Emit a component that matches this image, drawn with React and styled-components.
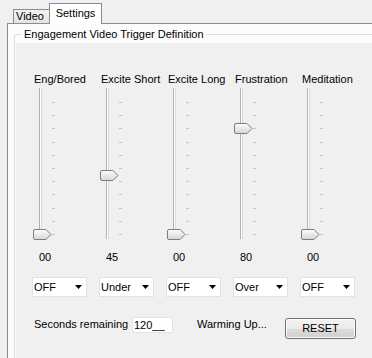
import React from "react";
import styled, { createGlobalStyle } from "styled-components";

const GlobalStyle = createGlobalStyle`
  body {
    margin: 0;
    background: #f0f0f0;
    font-family: "Liberation Sans", Arial, sans-serif;
    font-size: 11px;
    color: #000;
  }
`;

const Window = styled.div`
  width: 372px;
  height: 358px;
  overflow: hidden;
  background: #f0f0f0;
`;

const TabStrip = styled.div`
  display: flex;
  align-items: flex-end;
  height: 23px;
  padding-left: 13px;
`;

const Tab = styled.div`
  box-sizing: border-box;
  position: relative;
  border: 1px solid #898c95;
  border-bottom: none;
  text-align: center;
  ${(p) =>
    p.$active
      ? `
    z-index: 1;
    width: 53px;
    height: 21px;
    margin-bottom: -1px;
    line-height: 19px;
    background: #fff;
  `
      : `
    width: 36px;
    height: 14px;
    border-right: none;
    line-height: 13px;
    text-align: left;
    padding-left: 2px;
    background: linear-gradient(#f3f3f3, #e3e3e3);
  `}
`;

const TabPage = styled.div`
  margin-left: 7px;
  width: 400px;
  height: 360px;
  border-top: 1px solid #898c95;
  border-left: 1px solid #898c95;
  background: #fcfcfc;
`;

const Group = styled.fieldset`
  margin: 4px 0 0 6px;
  padding: 0;
  width: 400px;
  border: 1px solid #d5dfe5;
  border-radius: 3px;
  min-inline-size: 0;
`;

const Legend = styled.legend`
  margin-left: 7px;
  padding: 0 2px;
  line-height: 13px;
`;

const Content = styled.div`
  margin: 2px 0 0 1px;
  padding: 30px 0 40px 10px;
  background: #f0f0f0;
`;

const Columns = styled.div`
  display: flex;
`;

const Column = styled.div`
  width: 67px;
  display: flex;
  flex-direction: column;
`;

const ColLabel = styled.div`
  margin-left: 8px;
  height: 13px;
  line-height: 13px;
  white-space: nowrap;
`;

const SliderArea = styled.div`
  position: relative;
  display: flex;
  height: 152px;
  margin-top: 2px;
`;

const Track = styled.div`
  box-sizing: border-box;
  margin-left: 13px;
  width: 3px;
  height: 151px;
  border-left: 1px solid #b0b0b0;
  border-right: 1px solid #dadada;
  background: #fff;
`;

const Ticks = styled.div`
  display: flex;
  flex-direction: column;
  justify-content: space-between;
  margin: 14px 0 0 10px;
  height: 133px;
`;

const Tick = styled.div`
  width: 3px;
  height: 1px;
  background: #c4c4c4;
`;

const Thumb = styled.svg`
  position: absolute;
  left: 7px;
  width: 19px;
  height: 11px;
`;

const Value = styled.div`
  margin-top: 11px;
  padding-left: 13px;
  line-height: 13px;
`;

const Combo = styled.div`
  box-sizing: border-box;
  display: flex;
  align-items: center;
  justify-content: space-between;
  margin: 13px 0 0 6px;
  width: 55px;
  height: 20px;
  padding: 0 4px 0 1px;
  border: 1px solid #e0e2e6;
  background: #fff;
`;

const Arrow = styled.svg`
  width: 7px;
  height: 4px;
`;

const BottomRow = styled.div`
  display: flex;
  align-items: flex-start;
  margin-top: 20px;
  padding-left: 8px;
`;

const RowLabel = styled.div`
  width: ${(p) => p.$w}px;
  margin-left: ${(p) => p.$ml || 0}px;
  line-height: 13px;
  margin-top: 1px;
  white-space: nowrap;
`;

const TextBox = styled.div`
  box-sizing: border-box;
  width: 41px;
  height: 16px;
  padding-left: 1px;
  line-height: 14px;
  border: 1px solid #e0e3e8;
  background: #fff;
`;

const Button = styled.div`
  box-sizing: border-box;
  margin-top: 1px;
  width: 71px;
  height: 21px;
  line-height: 19px;
  text-align: center;
  border: 1px solid #707070;
  border-radius: 3px;
  box-shadow: inset 0 0 0 1px #fbfbfb;
  background: linear-gradient(#f2f2f2 0%, #ebebeb 50%, #dddddd 50%, #cfcfcf 100%);
`;

const sliders = [
  { label: "Eng/Bored", value: 0, mode: "OFF" },
  { label: "Excite Short", value: 45, mode: "Under" },
  { label: "Excite Long", value: 0, mode: "OFF" },
  { label: "Frustration", value: 80, mode: "Over" },
  { label: "Meditation", value: 0, mode: "OFF" },
];

const pad = (v) => String(v).padStart(2, "0");

const SliderThumb = ({ value, id }) => (
  <Thumb viewBox="0 0 19 11" style={{ top: Math.round(141 - value * 1.32) }}>
    <defs>
      <linearGradient id={id} x1="0" y1="0" x2="0" y2="1">
        <stop offset="0" stopColor="#fdfdfd" />
        <stop offset="1" stopColor="#d6d6d6" />
      </linearGradient>
    </defs>
    <path
      d="M0.5 2 Q0.5 0.5 2 0.5 L13 0.5 L18 5.5 L13 10.5 L2 10.5 Q0.5 10.5 0.5 9 Z"
      fill={`url(#${id})`}
      stroke="#7d7d7d"
    />
  </Thumb>
);

const Slider = ({ label, value, mode, index }) => (
  <Column>
    <ColLabel>{label}</ColLabel>
    <SliderArea>
      <Track />
      <Ticks>
        {Array.from({ length: 11 }).map((_, i) => (
          <Tick key={i} />
        ))}
      </Ticks>
      <SliderThumb value={value} id={`thumb${index}`} />
    </SliderArea>
    <Value>{pad(value)}</Value>
    <Combo>
      <span>{mode}</span>
      <Arrow viewBox="0 0 7 4">
        <polygon points="0,0 7,0 3.5,4" fill="#000" />
      </Arrow>
    </Combo>
  </Column>
);

export default function App() {
  return (
    <Window>
      <GlobalStyle />
      <TabStrip>
        <Tab>Video</Tab>
        <Tab $active>Settings</Tab>
      </TabStrip>
      <TabPage>
        <Group>
          <Legend>Engagement Video Trigger Definition</Legend>
          <Content>
            <Columns>
              {sliders.map((s, i) => (
                <Slider key={s.label} {...s} index={i} />
              ))}
            </Columns>
            <BottomRow>
              <RowLabel $w={98}>Seconds remaining</RowLabel>
              <TextBox>120__</TextBox>
              <RowLabel $w={88} $ml={24}>Warming Up...</RowLabel>
              <Button>RESET</Button>
            </BottomRow>
          </Content>
        </Group>
      </TabPage>
    </Window>
  );
}
